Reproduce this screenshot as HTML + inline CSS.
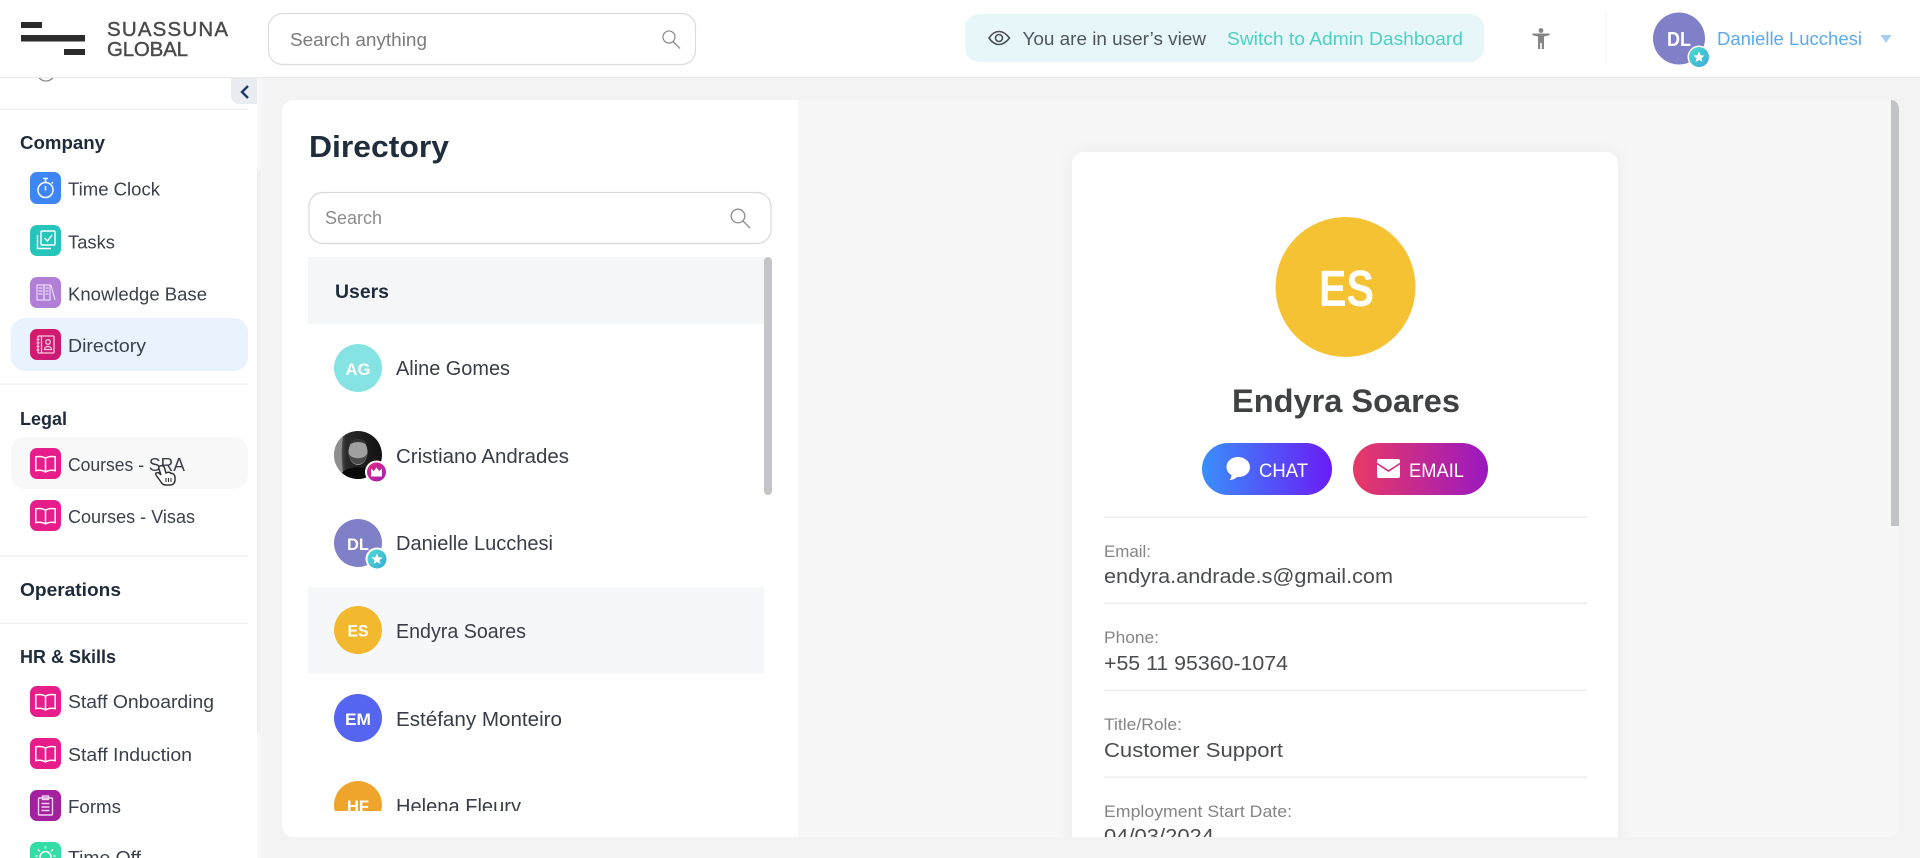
<!DOCTYPE html>
<html lang="en"><head><meta charset="utf-8"><title>Directory</title>
<style>
html,body{margin:0;padding:0;background:#f3f3f3;width:1920px;height:858px;overflow:hidden}
svg{display:block}
text{font-family:"Liberation Sans",sans-serif}
.nav{font-size:18px;fill:#3a414d}
.h{font-size:18px;font-weight:700;fill:#1f2b3b}
.nm{font-size:20px;fill:#383d47}
.ini{font-size:17px;font-weight:700;fill:#fff}
.lb{font-size:16.5px;fill:#858585}
.val{font-size:20px;fill:#4a4c4f}
</style></head><body>
<svg xmlns="http://www.w3.org/2000/svg" width="1920" height="858" viewBox="0 0 1920 858">
<defs>
<linearGradient id="gc" x1="0" x2="1" y1="0" y2="0"><stop offset="0" stop-color="#3a8ffa"/><stop offset="1" stop-color="#6a1cf6"/></linearGradient>
<linearGradient id="ge" x1="0" x2="1" y1="0" y2="0"><stop offset="0" stop-color="#e83a66"/><stop offset="1" stop-color="#9a18c0"/></linearGradient>
<linearGradient id="gb" x1="0" x2="1" y1="0" y2="1"><stop offset="0" stop-color="#e2297f"/><stop offset="1" stop-color="#a222b8"/></linearGradient>
<linearGradient id="gt" x1="0" x2="1" y1="0" y2="1"><stop offset="0" stop-color="#4fdcd2"/><stop offset="1" stop-color="#39a9d8"/></linearGradient>
<linearGradient id="gd" x1="0" x2="1" y1="0" y2="1"><stop offset="0" stop-color="#d81b6a"/><stop offset="1" stop-color="#c81a78"/></linearGradient>
<linearGradient id="gp" x1="0" x2="1" y1="0" y2="0"><stop offset="0" stop-color="#8a8a8a"/><stop offset=".25" stop-color="#2a2a2a"/><stop offset="1" stop-color="#111"/></linearGradient>
<clipPath id="list"><rect x="300" y="257" width="480" height="554"/></clipPath>
<clipPath id="card"><rect x="1060" y="100" width="570" height="737"/></clipPath>
<clipPath id="side"><rect x="0" y="78" width="262" height="780"/></clipPath>
<clipPath id="ph"><circle cx="358" cy="455" r="24"/></clipPath>
<filter id="sh" x="-10%" y="-10%" width="120%" height="120%"><feDropShadow dx="0" dy="0" stdDeviation="9" flood-color="#000" flood-opacity=".05"/></filter>
<g id="book"><rect width="31" height="31" rx="7" fill="#e71d8b"/><path d="M15.5 10.2C13 8.6 9 8.2 5.8 8.8V22.6C9 22 13 22.4 15.5 24 18 22.4 22 22 25.2 22.6V8.8C22 8.2 18 8.6 15.5 10.2ZM15.5 10.2V24" fill="none" stroke="#fff" stroke-width="1.5"/></g>
<g id="star"><path d="M0-5.6 1.6-1.8 5.600-1.500 2.500 1.100 3.500 5 0 2.900-3.500 5-2.500 1.100-5.600-1.500-1.600-1.800Z" fill="#fff"/></g>
</defs>

<rect width="1920" height="858" fill="#f3f3f3"/>

<!-- Main panels -->
<rect x="282" y="100" width="1617" height="737" rx="12" fill="#f7f7f7"/>
<path d="M294 100H798V837H294A12 12 0 0 1 282 825V112A12 12 0 0 1 294 100Z" fill="#fff"/>
<path d="M1891 100C1896 100 1899 104 1899 110V526H1891Z" fill="#c1c3c6"/>

<!-- Left panel -->
<text x="309" y="157" font-size="31" font-weight="700" fill="#1f2d3d" textLength="140" lengthAdjust="spacingAndGlyphs">Directory</text>
<rect x="309" y="192.500" width="462" height="51" rx="14" fill="#fff" stroke="#d9d9d9" stroke-width="1.200"/>
<text x="325" y="224" font-size="18" fill="#8c8c8c" textLength="57" lengthAdjust="spacingAndGlyphs">Search</text>
<g fill="none" stroke="#8f8f8f" stroke-width="1.400"><circle cx="738" cy="216" r="6.800"/><path d="M743 221 750 228"/></g>

<g clip-path="url(#list)">
<rect x="308" y="257" width="456" height="67" fill="#f5f6f7"/>
<text x="335" y="298" font-size="19.500" font-weight="700" fill="#1f2b3b" textLength="54" lengthAdjust="spacingAndGlyphs">Users</text>

<circle cx="358" cy="368" r="24" fill="#86e3e3"/>
<text x="358" y="375" class="ini" text-anchor="middle" textLength="25" lengthAdjust="spacingAndGlyphs">AG</text>
<text x="396" y="375" class="nm" textLength="114" lengthAdjust="spacingAndGlyphs">Aline Gomes</text>

<circle cx="358" cy="455" r="24" fill="url(#gp)"/>
<g clip-path="url(#ph)">
<path d="M334 431H344C341 445 341 460 344 479H334Z" fill="#8e8e8e"/>
<path d="M338 482C340 470 348 468 358 467 370 468 377 472 380 482Z" fill="#0a0a0a"/>
<ellipse cx="358" cy="452" rx="9.500" ry="13" fill="#a0a0a0"/>
<path d="M348.500 453C350 468 366 468 367.500 453 365 460 351 460 348.500 453Z" fill="#4a4a4a"/>
<path d="M349 445C350 437 366 437 367 445 362 441 354 441 349 445Z" fill="#333"/>
</g>
<circle cx="376.500" cy="472" r="11.500" fill="#fff"/><circle cx="376.500" cy="472" r="9.500" fill="url(#gb)"/>
<path d="M371 476.500V468.500L373.800 471 376.500 467.500 379.200 471 382 468.500V476.500Z" fill="#fff"/>
<text x="396" y="463" class="nm" textLength="173" lengthAdjust="spacingAndGlyphs">Cristiano Andrades</text>

<circle cx="358" cy="543" r="24" fill="#7f80c8"/>
<text x="358" y="550" class="ini" text-anchor="middle" textLength="22" lengthAdjust="spacingAndGlyphs">DL</text>
<circle cx="377" cy="559" r="11.500" fill="#fff"/><circle cx="377" cy="559" r="9.500" fill="url(#gt)"/><use href="#star" x="377" y="559"/>
<text x="396" y="550" class="nm" textLength="157" lengthAdjust="spacingAndGlyphs">Danielle Lucchesi</text>

<rect x="308" y="587" width="456" height="87" fill="#f6f7fa"/>
<circle cx="358" cy="630" r="24" fill="#f3b92e"/>
<text x="358" y="636.500" class="ini" font-size="17" text-anchor="middle" textLength="21" lengthAdjust="spacingAndGlyphs">ES</text>
<text x="396" y="638" class="nm" textLength="130" lengthAdjust="spacingAndGlyphs">Endyra Soares</text>

<circle cx="358" cy="718" r="24" fill="#5565f0"/>
<text x="358" y="725" class="ini" text-anchor="middle" textLength="26" lengthAdjust="spacingAndGlyphs">EM</text>
<text x="396" y="726" class="nm" textLength="166" lengthAdjust="spacingAndGlyphs">Estéfany Monteiro</text>

<circle cx="358" cy="805" r="24" fill="#efa52c"/>
<text x="358" y="812" class="ini" text-anchor="middle" textLength="22" lengthAdjust="spacingAndGlyphs">HF</text>
<text x="396" y="813" class="nm" textLength="125" lengthAdjust="spacingAndGlyphs">Helena Fleury</text>
</g>
<rect x="764" y="257" width="8" height="238" rx="4" fill="#c4c5c9"/>

<!-- Profile card -->
<g clip-path="url(#card)">
<rect x="1072" y="152" width="546" height="720" rx="12" fill="#fff" filter="url(#sh)"/>
<circle cx="1345.500" cy="287" r="70" fill="#f4c232"/>
<text x="1346.500" y="306" font-size="51" font-weight="700" fill="#fff" text-anchor="middle" textLength="55" lengthAdjust="spacingAndGlyphs">ES</text>
<text x="1232" y="412" font-size="32" font-weight="700" fill="#3f4142" textLength="228" lengthAdjust="spacingAndGlyphs">Endyra Soares</text>

<rect x="1202" y="443" width="130" height="52" rx="26" fill="url(#gc)"/>
<path d="M1238 457C1231.500 457 1226.500 461.500 1226.500 467 1226.500 470.500 1228.500 473.500 1231.500 475 1231.500 477 1230.500 479 1229.500 480 1232 480 1235 479 1237 477 1244 477.500 1250 473.500 1250 467 1250 461.500 1244.500 457 1238 457Z" fill="#fff"/>
<text x="1259" y="477" font-size="19.500" fill="#fff" textLength="49" lengthAdjust="spacingAndGlyphs">CHAT</text>

<rect x="1353" y="443" width="135" height="52" rx="26" fill="url(#ge)"/>
<rect x="1377" y="459" width="23" height="19" rx="2" fill="#fff"/>
<path d="M1377 463.500 1388.500 471 1400 463.500" fill="none" stroke="#cf2c7d" stroke-width="1.600"/>
<text x="1409" y="477" font-size="19.500" fill="#fff" textLength="55" lengthAdjust="spacingAndGlyphs">EMAIL</text>

<g fill="#ececec">
<rect x="1104" y="516.500" width="483" height="1.500"/>
<rect x="1104" y="602.500" width="483" height="1.500"/>
<rect x="1104" y="689.500" width="483" height="1.500"/>
<rect x="1104" y="776.500" width="483" height="1.500"/>
</g>
<text x="1104" y="557" class="lb" textLength="47" lengthAdjust="spacingAndGlyphs">Email:</text>
<text x="1104" y="583" class="val" textLength="289" lengthAdjust="spacingAndGlyphs">endyra.andrade.s@gmail.com</text>
<text x="1104" y="643" class="lb" textLength="55" lengthAdjust="spacingAndGlyphs">Phone:</text>
<text x="1104" y="670" class="val" textLength="184" lengthAdjust="spacingAndGlyphs">+55 11 95360-1074</text>
<text x="1104" y="730" class="lb" textLength="78" lengthAdjust="spacingAndGlyphs">Title/Role:</text>
<text x="1104" y="757" class="val" textLength="179" lengthAdjust="spacingAndGlyphs">Customer Support</text>
<text x="1104" y="817" class="lb" textLength="188" lengthAdjust="spacingAndGlyphs">Employment Start Date:</text>
<text x="1104" y="843" class="val" textLength="110" lengthAdjust="spacingAndGlyphs">04/03/2024</text>
</g>

<!-- Sidebar -->
<rect x="0" y="78" width="257" height="780" fill="#fff"/>
<rect x="257" y="78" width="5" height="780" fill="#f7f7f7"/>
<rect x="257" y="170" width="4" height="563" rx="2" fill="#f0f0f0"/>
<g clip-path="url(#side)">
<circle cx="46" cy="72" r="9" fill="none" stroke="#8a8a8a" stroke-width="1.300"/>
<path d="M231 78H257V104H239A8 8 0 0 1 231 96Z" fill="#e9ecf1"/>
<path d="M248 86 242 92 248 98" fill="none" stroke="#1d3a66" stroke-width="2.400"/>
<rect x="0" y="108.500" width="248" height="1.500" fill="#f2f2f2"/>
<text x="20" y="149" class="h" textLength="85" lengthAdjust="spacingAndGlyphs">Company</text>

<rect x="30" y="172" width="31" height="32" rx="7" fill="#3f86f5"/>
<g fill="none" stroke="#fff" stroke-width="1.500"><circle cx="45.500" cy="190" r="7.500"/><path d="M45.500 182V179M43 178.500H48M45.500 186V190.500M51.500 183.500 53 182"/></g>
<text x="68" y="195.500" class="nav" textLength="92" lengthAdjust="spacingAndGlyphs">Time Clock</text>

<rect x="30" y="225" width="31" height="31" rx="7" fill="#25c5bb"/>
<g fill="none" stroke="#fff" stroke-width="1.400"><rect x="41" y="231" width="14" height="14" rx="1"/><path d="M37.500 235V248.500H51M44.500 238 47.500 241 52 235"/></g>
<text x="68" y="248.500" class="nav" textLength="47" lengthAdjust="spacingAndGlyphs">Tasks</text>

<rect x="30" y="277" width="31" height="31" rx="7" fill="#b17fd8"/>
<g fill="none" stroke="#eadcf6" stroke-width="1.200"><rect x="37" y="285" width="7" height="15"/><rect x="44" y="285" width="6" height="15"/><path d="M51 285 55 300M38.500 288H42.500M45.500 288H48.500M38.500 291H42.500M45.500 291H48.500M38.500 294H42.500M45.500 294H48.500"/></g>
<text x="68" y="300.500" class="nav" textLength="139" lengthAdjust="spacingAndGlyphs">Knowledge Base</text>

<rect x="11" y="318" width="237" height="53" rx="14" fill="#e8f3fd"/>
<rect x="30" y="329" width="31" height="31" rx="7" fill="url(#gd)"/>
<g fill="none" stroke="#f7c9dd" stroke-width="1.300"><rect x="38" y="336" width="16" height="17" rx="1"/><path d="M41.500 336V353M36.500 339.500H39.500M36.500 343H39.500M36.500 346.500H39.500M36.500 350H39.500"/><circle cx="48" cy="342" r="2.300"/><path d="M44.500 349.500C44.500 345.500 51.500 345.500 51.500 349.500Z"/></g>
<text x="68" y="352" class="nav" textLength="78" lengthAdjust="spacingAndGlyphs">Directory</text>

<rect x="0" y="383.500" width="248" height="1.500" fill="#f2f2f2"/>
<text x="20" y="425" class="h" textLength="47" lengthAdjust="spacingAndGlyphs">Legal</text>

<rect x="11" y="437" width="237" height="52" rx="14" fill="#f8f8f8"/>
<use href="#book" x="30" y="448"/>
<text x="68" y="471" class="nav" textLength="117" lengthAdjust="spacingAndGlyphs">Courses - SRA</text>
<use href="#book" x="30" y="500"/>
<text x="68" y="523" class="nav" textLength="127" lengthAdjust="spacingAndGlyphs">Courses - Visas</text>

<rect x="0" y="555.500" width="248" height="1.500" fill="#f2f2f2"/>
<text x="20" y="596" class="h" textLength="101" lengthAdjust="spacingAndGlyphs">Operations</text>
<rect x="0" y="622.500" width="248" height="1.500" fill="#f2f2f2"/>
<text x="20" y="663" class="h" textLength="96" lengthAdjust="spacingAndGlyphs">HR &amp; Skills</text>

<use href="#book" x="30" y="686"/>
<text x="68" y="708" class="nav" textLength="146" lengthAdjust="spacingAndGlyphs">Staff Onboarding</text>
<use href="#book" x="30" y="738"/>
<text x="68" y="761" class="nav" textLength="124" lengthAdjust="spacingAndGlyphs">Staff Induction</text>

<rect x="30" y="790" width="31" height="31" rx="7" fill="#a3219e"/>
<g fill="none" stroke="#f3d5f1" stroke-width="1.400"><rect x="38.500" y="798" width="14" height="17" rx="1"/><rect x="42.500" y="796" width="6" height="3.500"/><path d="M41.500 803.500H49.500M41.500 807H49.500M41.500 810.500H49.500"/></g>
<text x="68" y="813" class="nav" textLength="53" lengthAdjust="spacingAndGlyphs">Forms</text>

<rect x="30" y="842" width="31" height="31" rx="7" fill="#34dca6"/>
<g fill="none" stroke="#fff" stroke-width="1.400"><circle cx="45.500" cy="857" r="5.500"/><path d="M45.500 846V848.500M38 849.500 40 851.500M53 849.500 51 851.500M35.500 856H37.500M53.500 856H55.500"/></g>
<text x="68" y="864" class="nav" textLength="73" lengthAdjust="spacingAndGlyphs">Time Off</text>

<!-- Hand cursor -->
<path d="M160 466C162 465 164 466 164.500 468L166 473C168 472 170 472 171 473.500 173 473 175 475 175 477V480C175 483 173 485 170 485H166C164 485 162 484 161 482L156 475C155 473 157 472 159 473L161 475 159 469C158.700 468 159 466.500 160 466Z" fill="#fff" stroke="#333" stroke-width="1.500"/>
<path d="M166 478V482M168.500 478V482M171 478V482" stroke="#333" stroke-width="1.100" fill="none"/>
</g>

<!-- Header -->
<rect x="0" y="0" width="1920" height="77" fill="#fff"/>
<rect x="0" y="77" width="1920" height="1" fill="#ececec"/>
<g fill="#2b2b2b">
<rect x="21" y="22" width="21" height="6"/>
<rect x="21" y="35" width="64" height="6.500"/>
<rect x="64" y="49" width="21" height="6"/>
</g>
<text x="107" y="36" font-size="20.500" fill="#4a4a4a" stroke="#4a4a4a" stroke-width=".4" textLength="121" lengthAdjust="spacing">SUASSUNA</text>
<text x="107" y="56" font-size="20.500" fill="#4a4a4a" stroke="#4a4a4a" stroke-width=".4" textLength="81" lengthAdjust="spacing">GLOBAL</text>

<rect x="268.500" y="13.500" width="427" height="51" rx="14" fill="#fff" stroke="#dcdcdc" stroke-width="1.200"/>
<text x="290" y="46" font-size="18" fill="#7c7c7c" textLength="137" lengthAdjust="spacingAndGlyphs">Search anything</text>
<g fill="none" stroke="#8f8f8f" stroke-width="1.300"><circle cx="669" cy="37" r="6"/><path d="M673 41.500 680 48.500"/></g>

<rect x="965" y="14" width="519" height="48" rx="14" fill="#e6f6f9"/>
<g fill="none" stroke="#4a4f55" stroke-width="1.600"><path d="M989 38C992 33.500 995 31.500 999 31.500 1003 31.500 1006 33.500 1009.500 38 1006 42.500 1003 44.500 999 44.500 995 44.500 992 42.500 989 38Z"/><circle cx="999" cy="38" r="3.500"/></g>
<text x="1022.500" y="45" font-size="18" fill="#50555c" textLength="183.500" lengthAdjust="spacingAndGlyphs">You are in user’s view</text>
<text x="1227" y="45" font-size="18" fill="#4ed0c2" textLength="236" lengthAdjust="spacingAndGlyphs">Switch to Admin Dashboard</text>

<g fill="#858585"><circle cx="1541" cy="30.500" r="2.400"/><path d="M1532.500 33.500H1549.500V35.300L1544 36.500V49H1541.800V43H1540.200V49H1538V36.500L1532.500 35.300Z"/></g>
<rect x="1605.500" y="10" width="1" height="55" fill="#f1f1f1"/>

<circle cx="1679" cy="38.500" r="26" fill="#7f80c8"/>
<text x="1679" y="46" font-size="20" font-weight="700" fill="#fff" text-anchor="middle" textLength="24" lengthAdjust="spacingAndGlyphs">DL</text>
<circle cx="1699" cy="57" r="11.500" fill="#fff"/><circle cx="1699" cy="57" r="10" fill="url(#gt)"/><use href="#star" x="1699" y="57"/>
<text x="1717" y="45" font-size="18" fill="#5aa8ee" textLength="145" lengthAdjust="spacingAndGlyphs">Danielle Lucchesi</text>
<path d="M1880.500 35H1891.500L1886 43Z" fill="#a8cdf5"/>
</svg>
</body></html>
